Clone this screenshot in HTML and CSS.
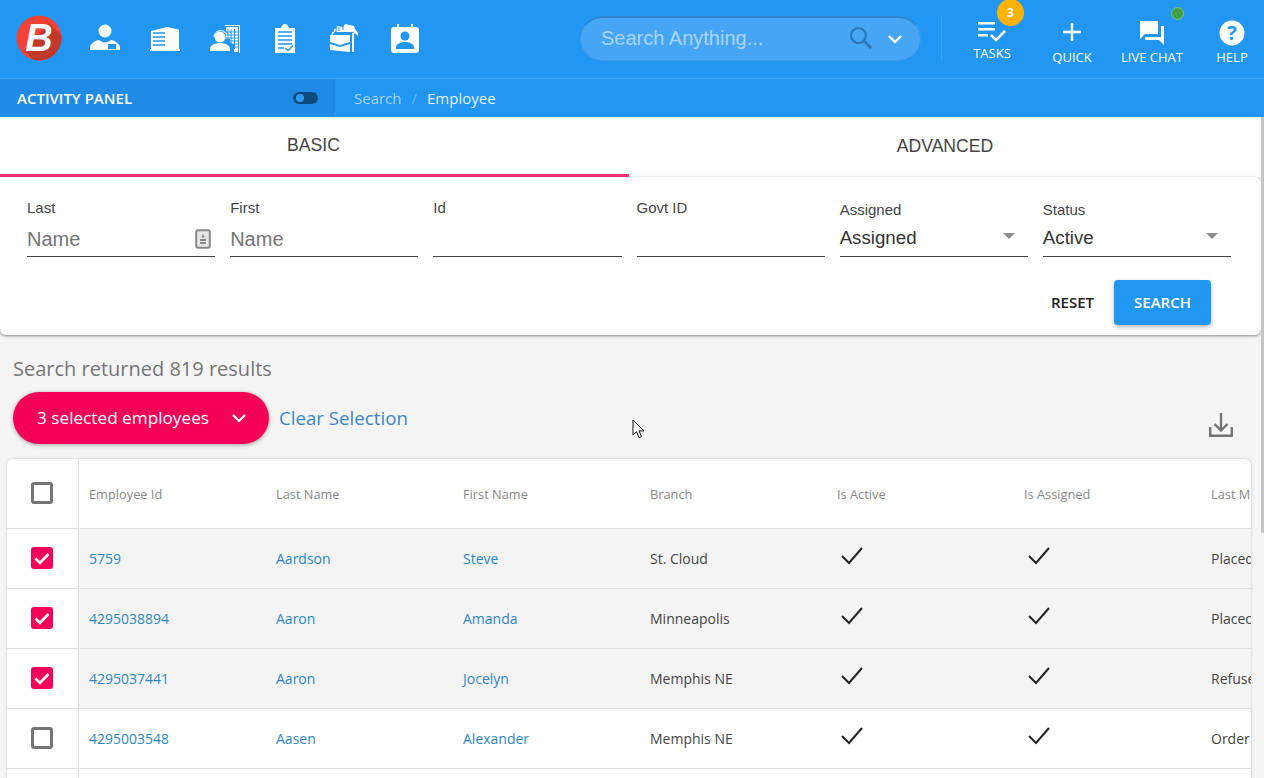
FILE: index.html
```html
<!DOCTYPE html>
<html lang="en">
<head>
<meta charset="utf-8">
<title>Employee Search</title>
<link rel="stylesheet" href="styles.css">
</head>
<body>
<div class="page">
  <header class="topbar">
    <svg class="logo" width="46" height="46" viewBox="0 0 46 46">
      <defs><clipPath id="lc"><circle cx="23" cy="23" r="22.5"/></clipPath></defs>
      <circle cx="23" cy="23" r="22.5" fill="#f44336"/>
      <polygon clip-path="url(#lc)" points="33,8 50,25 50,50 22,50 8,35" fill="#c0392b"/>
      <text x="23" y="36" text-anchor="middle" class="logo-b">B</text>
    </svg>
    <nav class="mainnav">
      <svg class="ni" width="30" height="30" viewBox="0 0 30 30"><circle cx="15" cy="8" r="6.5" fill="#fff"/><path d="M0 27v-3c1-4 6-7 9-7 2 1.600 4 2.500 6 2.500s4-.9 6-2.500c3 0 8 3 9 7v3z" fill="#fff"/><rect x="18" y="21" width="8" height="5" fill="#2196f3"/></svg>
      <svg class="ni" width="30" height="30" viewBox="0 0 30 30"><path d="M1 27V8l16-4 12 2.500V26H1z" fill="#fff"/><path d="M3 10h12M3 14h12M3 18h12M3 22h12" stroke="#2196f3" stroke-width="1.500"/><rect x="0" y="26" width="30" height="2" fill="#fff"/></svg>
      <svg class="ni" width="30" height="30" viewBox="0 0 30 30"><path d="M15 2h15v28h-1V3H15z" fill="#fff"/><path d="M15 3h14v27h-4V22l-7-5h-3z" fill="#2196f3"/><path d="M16 4h12v25h-4v-7l-4-3v-3h-4z" fill="#fff"/><path d="M18 6v20M21 6v20M24.500 6v20M16 9h12M16 12h12M16 15h12M16 18h12M16 21h12M16 24h12" stroke="#2196f3" stroke-width="1"/><circle cx="10" cy="14" r="5.500" fill="#fff"/><path d="M4 14a6.500 6.500 0 0 1 13 0" fill="none" stroke="#fff" stroke-width="1"/><path d="M0 28v-2c0-4 5-6 10-6s10 2 10 6v2z" fill="#fff"/></svg>
      <svg class="ni" width="22" height="30" viewBox="0 0 22 30"><path d="M1 5h6c.5-2 2-4 4-4s3.500 2 4 4h6v25H1z" fill="#fff"/><path d="M4 9h14M4 13h14M4 17h14M4 21h14M4 25h6" stroke="#2196f3" stroke-width="1.300"/><path d="M11 25l3 2.500 5-5" stroke="#2196f3" stroke-width="1.300" fill="none"/></svg>
      <svg class="ni" width="30" height="30" viewBox="0 0 30 30"><path d="M3 13V9l2-.5V6l3-.5V3l6 1 2-3 9 2 1 3 3 4v3l-5-4H5z" fill="#fff"/><path d="M7 9V6M10 8V4M14 7V3" stroke="#2196f3" stroke-width="1"/><path d="M1 12h20v7l-10 3-10-3zM1 21l10 3 10-3v8L1 27z" fill="#fff"/><rect x="23" y="10" width="2" height="19" fill="#fff"/><rect x="21.500" y="9" width="1.500" height="21" fill="#2196f3"/></svg>
      <svg class="ni" width="28" height="30" viewBox="0 0 28 30"><path d="M3 4h3V1h2v3h12V1h2v3h3a3 3 0 0 1 3 3v20a3 3 0 0 1-3 3H3a3 3 0 0 1-3-3V7a3 3 0 0 1 3-3z" fill="#fff"/><circle cx="14" cy="13" r="4.500" fill="#2196f3"/><path d="M5 26v-2c0-3 5-5 9-5s9 2 9 5v2z" fill="#2196f3"/></svg>
    </nav>
    <div class="searchbox">
      <span class="searchbox-text">Search Anything...</span>
      <svg class="searchbox-mag" width="24" height="24" viewBox="0 0 24 24"><circle cx="9.500" cy="9.500" r="7.500" fill="none" stroke="#2a75b5" stroke-width="2.200"/><path d="M15 15l7 7" stroke="#2a75b5" stroke-width="2.600"/></svg>
      <svg class="searchbox-chev" width="16" height="16" viewBox="0 0 16 16"><path d="M2 5l6 6 6-6" fill="none" stroke="#fff" stroke-width="2.400"/></svg>
    </div>
    <div class="topbar-rule"></div>
    <div class="actions">
      <div class="action action-tasks">
        <svg width="30" height="24" viewBox="0 0 30 24"><path d="M1 3h17v2.500H1zM1 9h17v2.500H1zM1 15h10v2.500H1z" fill="#fff"/><path d="M14 16l5 5 9-9" fill="none" stroke="#fff" stroke-width="2.500"/></svg>
        <span class="badge">3</span>
        <span class="action-label">TASKS</span>
      </div>
      <div class="action">
        <svg width="24" height="24" viewBox="0 0 24 24"><path d="M12 3v18M3 12h18" stroke="#fff" stroke-width="2.400"/></svg>
        <span class="action-label">QUICK</span>
      </div>
      <div class="action">
        <svg width="26" height="26" viewBox="0 0 26 26"><path d="M1 1h18v13H6l-5 5z" fill="#fff"/><path d="M22 6h3v19l-5-5H6v-3h16z" fill="#fff"/></svg>
        <span class="dot"></span>
        <span class="action-label">LIVE CHAT</span>
      </div>
      <div class="action">
        <svg width="26" height="26" viewBox="0 0 26 26"><circle cx="13" cy="13" r="12.500" fill="#fff"/><text x="13" y="20" text-anchor="middle" class="help-q">?</text></svg>
        <span class="action-label">HELP</span>
      </div>
    </div>
  </header>

  <div class="subbar">
    <div class="panel">
      <span class="panel-title">ACTIVITY PANEL</span>
      <span class="toggle"><span class="toggle-knob"></span></span>
    </div>
    <div class="crumbs"><span>Search</span><span class="crumb-sep">/</span><span class="crumb-now">Employee</span></div>
  </div>

  <main class="content">
    <div class="tabs">
      <div class="tab tab-on">BASIC</div>
      <div class="tab">ADVANCED</div>
    </div>
    <section class="card">
      <div class="fields">
        <label class="field"><span class="field-label">Last</span><span class="field-box"><span class="ph">Name</span>
          <svg width="16" height="20" viewBox="0 0 16 20"><rect x="1.200" y="1.200" width="13.600" height="17.600" rx="2" fill="#e6e6e6" stroke="#8a8a8a" stroke-width="2"/><path d="M8 4.500l1.500 4h-3zM5 10h6v2H5zM5 13h6v2H5z" fill="#8a8a8a"/></svg></span></label>
        <label class="field"><span class="field-label">First</span><span class="field-box"><span class="ph">Name</span></span></label>
        <label class="field"><span class="field-label">Id</span><span class="field-box"></span></label>
        <label class="field"><span class="field-label">Govt ID</span><span class="field-box"></span></label>
        <label class="field field-sel"><span class="field-label">Assigned</span><span class="field-box"><span class="val">Assigned</span><span class="caret"></span></span></label>
        <label class="field field-sel"><span class="field-label">Status</span><span class="field-box"><span class="val">Active</span><span class="caret"></span></span></label>
      </div>
      <div class="buttons">
        <span class="btn-reset">RESET</span>
        <span class="btn-search">SEARCH</span>
      </div>
    </section>

    <p class="results">Search returned 819 results</p>
    <div class="toolbar">
      <div class="pill"><span>3 selected employees</span>
        <svg width="16" height="16" viewBox="0 0 16 16"><path d="M2 5l6 6 6-6" fill="none" stroke="#fff" stroke-width="2.200"/></svg>
      </div>
      <span class="clear">Clear Selection</span>
      <svg class="download" width="24" height="26" viewBox="0 0 24 26"><path d="M1.200 15v8.800h21.600V15" fill="none" stroke="#757575" stroke-width="2.400"/><path d="M12 1v17M5.500 12l6.500 6.500 6.500-6.500" fill="none" stroke="#757575" stroke-width="2.400"/></svg>
    </div>

    <div class="grid">
      <div class="row row-head">
        <div class="c-check"><span class="box"></span></div>
        <div class="c">Employee Id</div><div class="c">Last Name</div><div class="c">First Name</div><div class="c">Branch</div><div class="c">Is Active</div><div class="c">Is Assigned</div><div class="c">Last Modified</div>
      </div>
      <div class="row row-sel">
        <div class="c-check"><span class="box box-on"><svg width="20" height="20" viewBox="0 0 20 20"><path d="M3.500 10.500l4.500 4.500 8.500-9" fill="none" stroke="#fff" stroke-width="2.600"/></svg></span></div>
        <div class="c link">5759</div><div class="c link">Aardson</div><div class="c link">Steve</div><div class="c">St. Cloud</div>
        <div class="c"><svg class="tick" width="24" height="20" viewBox="0 0 24 20"><path d="M2 10l7 7L22 2" fill="none" stroke="#222" stroke-width="2"/></svg></div>
        <div class="c"><svg class="tick" width="24" height="20" viewBox="0 0 24 20"><path d="M2 10l7 7L22 2" fill="none" stroke="#222" stroke-width="2"/></svg></div>
        <div class="c">Placed</div>
      </div>
      <div class="row row-sel">
        <div class="c-check"><span class="box box-on"><svg width="20" height="20" viewBox="0 0 20 20"><path d="M3.500 10.500l4.500 4.500 8.500-9" fill="none" stroke="#fff" stroke-width="2.600"/></svg></span></div>
        <div class="c link">4295038894</div><div class="c link">Aaron</div><div class="c link">Amanda</div><div class="c">Minneapolis</div>
        <div class="c"><svg class="tick" width="24" height="20" viewBox="0 0 24 20"><path d="M2 10l7 7L22 2" fill="none" stroke="#222" stroke-width="2"/></svg></div>
        <div class="c"><svg class="tick" width="24" height="20" viewBox="0 0 24 20"><path d="M2 10l7 7L22 2" fill="none" stroke="#222" stroke-width="2"/></svg></div>
        <div class="c">Placed</div>
      </div>
      <div class="row row-sel">
        <div class="c-check"><span class="box box-on"><svg width="20" height="20" viewBox="0 0 20 20"><path d="M3.500 10.500l4.500 4.500 8.500-9" fill="none" stroke="#fff" stroke-width="2.600"/></svg></span></div>
        <div class="c link">4295037441</div><div class="c link">Aaron</div><div class="c link">Jocelyn</div><div class="c">Memphis NE</div>
        <div class="c"><svg class="tick" width="24" height="20" viewBox="0 0 24 20"><path d="M2 10l7 7L22 2" fill="none" stroke="#222" stroke-width="2"/></svg></div>
        <div class="c"><svg class="tick" width="24" height="20" viewBox="0 0 24 20"><path d="M2 10l7 7L22 2" fill="none" stroke="#222" stroke-width="2"/></svg></div>
        <div class="c">Refused</div>
      </div>
      <div class="row">
        <div class="c-check"><span class="box"></span></div>
        <div class="c link">4295003548</div><div class="c link">Aasen</div><div class="c link">Alexander</div><div class="c">Memphis NE</div>
        <div class="c"><svg class="tick" width="24" height="20" viewBox="0 0 24 20"><path d="M2 10l7 7L22 2" fill="none" stroke="#222" stroke-width="2"/></svg></div>
        <div class="c"><svg class="tick" width="24" height="20" viewBox="0 0 24 20"><path d="M2 10l7 7L22 2" fill="none" stroke="#222" stroke-width="2"/></svg></div>
        <div class="c">Order</div>
      </div>
      <div class="row"><div class="c-check"></div></div>
    </div>
  </main>

  <span class="scroll-thumb"></span>
  <svg class="cursor" width="13" height="20" viewBox="0 0 13 20"><path d="M1 1v15l3.500-3.300 2.500 6 2.500-1-2.500-5.800h5z" fill="#fff" stroke="#111" stroke-width="1"/></svg>
</div>
</body>
</html>
```

FILE: styles.css
```css
* { box-sizing: border-box; }
html, body { margin: 0; padding: 0; height: 100%; overflow: hidden; }
body { background: #f5f5f5; font-family: "Open Sans", sans-serif; color: #333; }
.page { position: relative; width: 1264px; height: 778px; overflow: hidden; }

.topbar { height: 79px; background: #2196f3; border-bottom: 1px solid #4aa9f5; display: flex; align-items: flex-start; }
.logo { margin: 15px 0 0 16px; flex: none; }
.logo-b { font: italic 700 38px "Liberation Sans", sans-serif; fill: #fff; }
.mainnav { display: flex; align-items: flex-start; margin: 23px 0 0 28px; gap: 30px; width: 328px; flex: none; }
.ni { flex: none; display: block; }
.mainnav .ni:nth-child(4) { margin-left: 4px; }
.mainnav .ni:nth-child(5) { margin-left: 3px; }
.mainnav .ni:nth-child(6) { margin-left: 2px; }

.searchbox { margin: 16px 0 0 162px; width: 341px; height: 45px; flex: none; border-radius: 23px; background: #47a5f6; border: 1px solid #3f97e2; border-top: 2px solid #2f85cf; display: flex; align-items: center; padding: 0 17px 0 20px; }
.searchbox-text { font: 20px "Liberation Sans", sans-serif; color: #a9d5fb; flex: 1; margin-top: -1px; }
.searchbox-mag { margin: -2px 14px 0 0; }
.topbar-rule { width: 1px; height: 45px; margin: 16px 0 0 20px; background: #3f9ff0; flex: none; }
.actions { display: flex; margin-left: 10px; position: relative; }
.action { position: relative; width: 80px; height: 78px; display: flex; flex-direction: column; align-items: center; padding-top: 20px; }
.action-label { font-size: 13px; color: #fff; position: absolute; top: 48px; white-space: nowrap; }
.action-tasks .action-label { top: 44px; }
.action-tasks svg { margin-top: -1px; }
.badge { position: absolute; left: 45px; top: -1px; width: 27px; height: 27px; border-radius: 50%; background: #ffb300; color: #fff; font-size: 12px; font-weight: 700; display: flex; align-items: center; justify-content: center; }
.dot { position: absolute; left: 59px; top: 7px; width: 13px; height: 13px; border-radius: 50%; background: #43a047; border: 1px solid #7cc47f; }
.help-q { font: 700 20px "Open Sans", sans-serif; fill: #2196f3; }

.subbar { height: 38px; background: #2196f3; display: flex; align-items: stretch; }
.panel { width: 335px; background: #1f8be6; display: flex; align-items: center; justify-content: space-between; padding: 0 17px; }
.panel-title { font-size: 15px; font-weight: 600; color: #fff; }
.toggle { width: 25px; height: 12px; border-radius: 6px; background: #0d4a7d; position: relative; display: block; }
.toggle-knob { position: absolute; left: 3px; top: 2px; width: 8px; height: 8px; border-radius: 50%; background: #2f9bf5; }
.crumbs { display: flex; align-items: center; padding-left: 19px; font-size: 15px; color: #a6d3fa; }
.crumb-sep { margin: 0 10px; color: #6db8f7; }
.crumb-now { color: #e6f3fe; }

.content { display: flex; flex-direction: column; padding-right: 3px; }
.tabs { display: flex; height: 60px; background: #fff; }
.tab { font: 17.6px "Liberation Sans", sans-serif; color: #444; display: flex; align-items: center; justify-content: center; padding-bottom: 2px; }
.tab:first-child { width: 627px; margin-right: 2px; position: relative; }
.tab:first-child::after { content: ""; position: absolute; right: -2px; bottom: -3px; width: 2px; height: 3px; background: #f73378; }
.tab:last-child { flex: 1; }
.tab-on { border-bottom: 3px solid #f73378; padding-bottom: 0; }

.card { height: 158px; background: #fff; border-radius: 0 6px 6px 6px; box-shadow: 0 1px 3px rgba(0,0,0,.45); padding: 0 30px 0 27px; position: relative; }
.fields { display: grid; grid-template-columns: repeat(6, 1fr); column-gap: 15px; height: 80px; }
.field { position: relative; display: block; height: 80px; padding-top: 22px; }
.field-label { font: 15px "Liberation Sans", sans-serif; color: #444; display: block; line-height: 18px; }
.field-sel .field-label { margin-top: 2px; }
.field-box { position: absolute; left: 0; right: 0; top: 44px; height: 36px; border-bottom: 1px solid #444; display: flex; align-items: center; justify-content: space-between; }
.ph { font: 20px "Liberation Sans", sans-serif; color: #757575; margin-top: 1px; }
.val { font: 18.7px "Liberation Sans", sans-serif; color: #333; margin-top: -2px; }
.caret { width: 0; height: 0; border-left: 6px solid transparent; border-right: 6px solid transparent; border-top: 6px solid #8e8e8e; margin: -6px 13px 0 0; }
.field-box svg { margin-right: 4px; }
.buttons { display: flex; justify-content: flex-end; align-items: center; margin-top: 23px; padding-right: 20px; }
.btn-reset { font-size: 15px; font-weight: 600; color: #222; margin: -1px 20px 0 0; }
.btn-search { width: 97px; height: 45px; border-radius: 4px; background: #2196f3; color: #fff; font-size: 15px; font-weight: 600; display: flex; align-items: center; justify-content: center; padding-bottom: 2px; box-shadow: 0 2px 4px rgba(0,0,0,.3); }

.results { margin: 21px 0 0 13px; font-size: 20px; line-height: 26px; color: #757575; }
.toolbar { display: flex; align-items: center; height: 52px; margin: 10px 0 0 13px; }
.pill { width: 256px; height: 52px; border-radius: 26px; background: #f50057; color: #fff; font-size: 17.2px; display: flex; align-items: center; justify-content: space-between; padding: 0 22px 0 24px; box-shadow: 0 1px 4px rgba(0,0,0,.35); }
.pill span { margin-top: -1px; }
.clear { margin-left: 10px; font-size: 18.7px; color: #3d85c6; flex: 1; margin-top: -1px; }
.download { margin: 14px 28px 0 0; }

.grid { margin: 15px 0 0 7px; width: 1244px; background: #fff; border-radius: 6px 6px 0 0; box-shadow: 0 0 3px rgba(0,0,0,.2); overflow: hidden; }
.row { display: grid; grid-template-columns: 72px repeat(6, 187px) 1fr; height: 60px; border-top: 1px solid #e0e0e0; align-items: stretch; font-size: 14px; color: #444; }
.row-head { height: 69px; border-top: 0; font-size: 12.8px; color: #888; }
.row-sel { background: #f4f4f4; }
.c-check { background: #fff; border-right: 1px solid #e0e0e0; display: flex; align-items: center; justify-content: center; padding-right: 2px; }
.row:not(.row-head) .c-check { padding-bottom: 2px; }
.row-head .c-check { padding-bottom: 1px; }
.c { display: flex; align-items: center; padding-left: 10px; white-space: nowrap; overflow: hidden; }
.link { color: #2e86c1; }
.tick { margin: -5px 0 0 3px; }
.box { width: 22px; height: 22px; border: 3px solid #757575; border-radius: 3px; display: block; }
.box-on { background: #f50057; border: 0; display: flex; align-items: center; justify-content: center; }

.scroll-thumb { position: absolute; right: 0; top: 117px; width: 3px; height: 416px; background: #c4c4c4; }
.cursor { position: absolute; left: 632px; top: 419px; }
```
